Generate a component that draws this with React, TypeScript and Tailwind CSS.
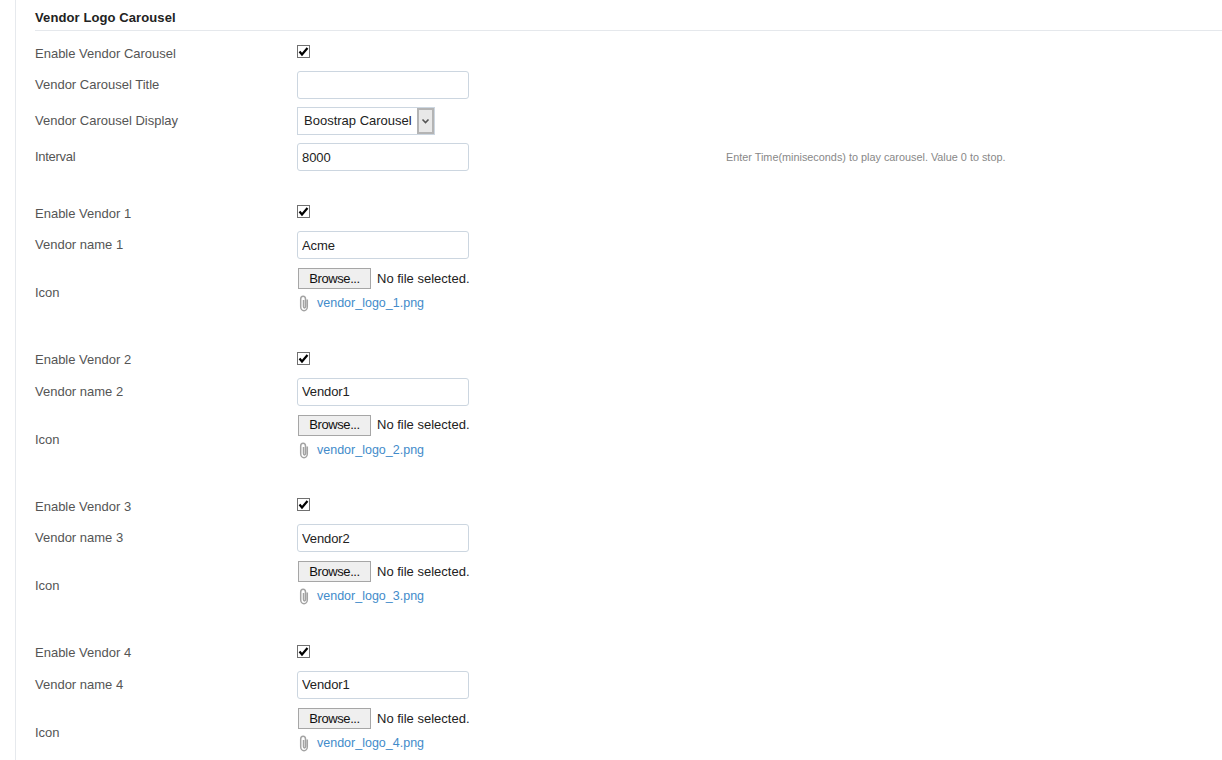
import React from 'react';

const vendors = [
  { n: 1, name: 'Acme' },
  { n: 2, name: 'Vendor1' },
  { n: 3, name: 'Vendor2' },
  { n: 4, name: 'Vendor1' },
];

const Label = ({ children, className = '' }: { children: React.ReactNode; className?: string }) => (
  <div className={`w-[262px] shrink-0 text-[13px] leading-[16px] text-[#555555] ${className}`}>{children}</div>
);

const Check = () => (
  <div className="w-[13px] h-[13px] border border-[#707070] bg-white flex items-center justify-center">
    <svg width="11" height="11" viewBox="0 0 11 11">
      <path d="M1.5 5.5 L4 8.5 L9.5 2" fill="none" stroke="#000" strokeWidth="2.2" />
    </svg>
  </div>
);

const TextBox = ({ value }: { value: string }) => (
  <input
    readOnly
    value={value}
    className="w-[172px] h-[28px] border border-[#ccd6e0] rounded-[3px] bg-white px-[4px] text-[13px] tracking-[-0.1px] text-[#222222] outline-none"
  />
);

const Clip = () => (
  <svg width="10" height="17" viewBox="0 0 10 17" fill="none" stroke="#a3a3a3" strokeWidth="1.5">
    <path d="M8.3 4.5 V11.8 a3.3 4 0 0 1 -6.6 0 V4 a2.4 2.8 0 0 1 4.8 0 V11.5 a1 1.4 0 0 1 -2 0 V5" />
  </svg>
);

const VendorBlock = ({ n, name }: { n: number; name: string }) => (
  <div className="h-[146.67px]">
    <div className="flex items-center h-[13px]">
      <Label className="pt-[4px]">Enable Vendor {n}</Label>
      <Check />
    </div>
    <div className="flex items-center mt-[13px]">
      <Label>Vendor name {n}</Label>
      <TextBox value={name} />
    </div>
    <div className="flex items-center mt-[9px]">
      <Label className="pt-[6px]">Icon</Label>
      <div>
        <div className="flex items-center h-[21px]">
          <div className="ml-[1px] w-[73px] h-[21px] border border-[#a6a6a6] bg-[#efefef] text-[13px] tracking-[-0.4px] text-[#111111] flex items-center justify-center">
            Browse...
          </div>
          <span className="ml-[6px] text-[13px] text-[#222222]">No file selected.</span>
        </div>
        <div className="flex items-center h-[17px] mt-[6px]">
          <span className="ml-[2px] flex">
            <Clip />
          </span>
          <span className="ml-[8px] text-[12.5px] text-[#428bca]">vendor_logo_{n}.png</span>
        </div>
      </div>
    </div>
  </div>
);

export default function App() {
  return (
    <div className="h-[760px] overflow-hidden bg-white font-['Liberation_Sans',Arial,sans-serif]">
      <div className="ml-[15px] h-full border-l border-[#e6e9ed] pl-[19px]">
        <div className="h-[31px] border-b border-[#e5e8ec] pt-[10px] text-[13px] tracking-[0.1px] font-bold leading-[16px] text-[#222222]">
          Vendor Logo Carousel
        </div>
        <div className="flex items-center h-[13px] mt-[14px]">
          <Label className="pt-[4px]">Enable Vendor Carousel</Label>
          <Check />
        </div>
        <div className="flex items-center mt-[13px]">
          <Label>Vendor Carousel Title</Label>
          <TextBox value="" />
        </div>
        <div className="flex items-center mt-[8px]">
          <Label>Vendor Carousel Display</Label>
          <div className="flex h-[28px] w-[138px] border border-[#ccd6e0] bg-white">
            <span className="flex-1 pl-[6px] text-[13px] leading-[26px] text-[#222222]">Boostrap Carousel</span>
            <div className="w-[17px] border-2 border-[#b4b4b4] bg-[#e8e8e8] flex items-center justify-center">
              <svg width="9" height="7" viewBox="0 0 9 7">
                <path d="M1.5 1.5 L4.5 4.5 L7.5 1.5" fill="none" stroke="#555" strokeWidth="1.6" />
              </svg>
            </div>
          </div>
        </div>
        <div className="flex items-center mt-[8px]">
          <Label>
            <span className="tracking-[-0.3px]">Interval</span>
          </Label>
          <TextBox value="8000" />
          <span className="ml-[257px] text-[10.85px] text-[#888888]">
            Enter Time(miniseconds) to play carousel. Value 0 to stop.
          </span>
        </div>
        <div className="mt-[34px]">
          {vendors.map(v => (
            <VendorBlock key={v.n} n={v.n} name={v.name} />
          ))}
        </div>
      </div>
    </div>
  );
}
